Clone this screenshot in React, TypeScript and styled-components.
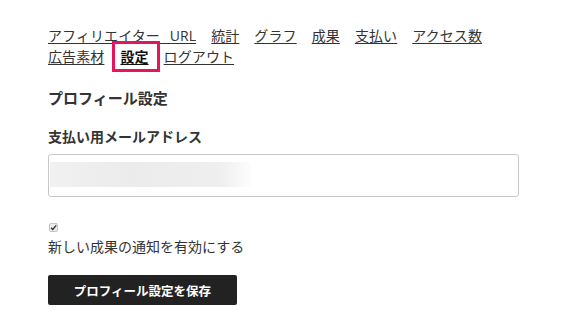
import React from 'react';
import styled, { createGlobalStyle } from 'styled-components';

const navItems = ['アフィリエイター URL', '統計', 'グラフ', '成果', '支払い', 'アクセス数', '広告素材', '設定', 'ログアウト'];
const activeItem = '設定';

const App: React.FC<{}> = () => {
  return (
    <>
      <GlobalStyle />
      <Page>
        <Nav>
          {navItems.map((name) => (
            <NavLink key={name} href="#" $active={name === activeItem}>
              {name}
            </NavLink>
          ))}
        </Nav>

        <Heading>プロフィール設定</Heading>

        <Label>支払い用メールアドレス</Label>
        <Field>
          {/* the address is blurred out in the capture */}
          <Redacted />
        </Field>

        <CheckRow>
          <CheckBox>
            <svg width="7" height="7" viewBox="0 0 10 10">
              <path d="M1.5 5.2 L4 7.8 L8.8 2" fill="none" stroke="#333" strokeWidth="2" />
            </svg>
          </CheckBox>
          <CheckText>新しい成果の通知を有効にする</CheckText>
        </CheckRow>

        <SaveButton>プロフィール設定を保存</SaveButton>
      </Page>
    </>
  );
};

export default App;

/* Styling */
const GlobalStyle = createGlobalStyle`
  body {
    margin: 0;
    background: #fff;
    font-family: "Noto Sans CJK JP", "Noto Sans", sans-serif;
    color: #333;
  }
`;

const Page = styled.div`
  padding: 25px 48px 0 48px;
  display: flex;
  flex-direction: column;
  align-items: flex-start;
`;

const Nav = styled.nav`
  width: 450px;
  display: flex;
  flex-wrap: wrap;
  column-gap: 15px;
  font-family: "Open Sans", "Noto Sans CJK JP", sans-serif;
  font-size: 14px;
  line-height: 21px;
  word-spacing: 6px;
  letter-spacing: 0.1px;
`;

const NavLink = styled.a<{ $active?: boolean }>`
  position: relative;
  color: ${(p) => (p.$active ? '#111' : '#333')};
  font-weight: ${(p) => (p.$active ? 700 : 400)};
  text-decoration: underline;
  text-underline-offset: 2px;
  text-decoration-thickness: 1px;
  margin-left: ${(p) => (p.$active ? '1px' : '0')};

  &::after {
    content: '';
    display: ${(p) => (p.$active ? 'block' : 'none')};
    position: absolute;
    left: -8px;
    right: -11px;
    top: -5px;
    bottom: -5px;
    border: 3px solid #e5145b;
  }
`;

const Heading = styled.h2`
  margin: 21px 0 0 0;
  font-size: 15px;
  line-height: 20px;
  font-weight: 700;
  color: #333;
`;

const Label = styled.label`
  margin-top: 18px;
  font-size: 14px;
  line-height: 20px;
  font-weight: 700;
  color: #333;
`;

const Field = styled.div`
  box-sizing: border-box;
  margin-top: 8px;
  width: 471px;
  height: 43px;
  border: 1px solid #c8c8c8;
  border-radius: 3px;
  padding: 7px 0 0 1px;
`;

const Redacted = styled.div`
  width: 201px;
  height: 25px;
  background: linear-gradient(to right, #f1f1f1 0%, #ebebeb 40%, #efefef 85%, #fdfdfd 100%);
`;

const CheckRow = styled.div`
  margin-top: 26px;
  display: flex;
  flex-direction: column;
  align-items: flex-start;
  gap: 4px;
`;

const CheckBox = styled.span`
  box-sizing: border-box;
  width: 9px;
  height: 9px;
  margin-left: 1px;
  display: flex;
  align-items: center;
  justify-content: center;
  background: #ececec;
  border: 1px solid #c4c4c4;
  border-radius: 2px;
`;

const CheckText = styled.span`
  font-size: 14px;
  line-height: 20px;
  color: #333;
`;

const SaveButton = styled.button`
  margin-top: 19px;
  width: 189px;
  height: 30px;
  border: none;
  border-radius: 2px;
  background: #222;
  color: #fff;
  font-family: "Noto Sans CJK JP", "Noto Sans", sans-serif;
  font-size: 12.5px;
  font-weight: 700;
  cursor: pointer;
`;
